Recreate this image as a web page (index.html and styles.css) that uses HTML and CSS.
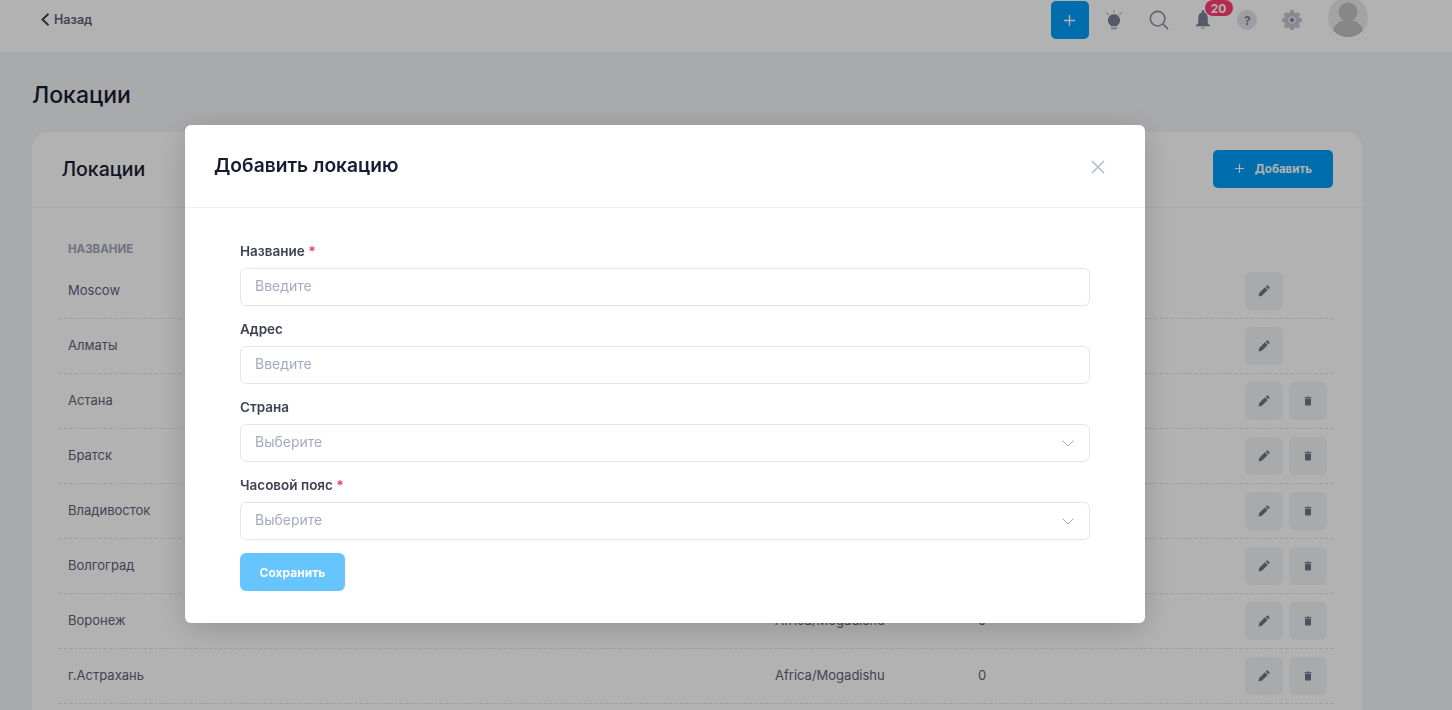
FILE: index.html
```html
<!DOCTYPE html>
<html lang="ru">
<head>
<meta charset="utf-8">
<title>Локации</title>
<link rel="stylesheet" href="styles.css">
</head>
<body>
<svg class="defs" width="0" height="0" aria-hidden="true">
  <symbol id="pen" viewBox="0 0 12 12"><path d="M8.600.7a.9.9 0 0 1 1.300 0l1.400 1.400a.9.9 0 0 1 0 1.300l-.9.9-2.700-2.700zM7 2.300 9.700 5 3.900 10.800.6 11.400l.6-3.300z"/></symbol>
  <symbol id="bin" viewBox="0 0 10 12"><path d="M3.600.4h2.800v1H9.400v1.100H.6V1.400h3zM1.300 3.300h7.400v7a1.300 1.300 0 0 1-1.300 1.300H2.600a1.300 1.300 0 0 1-1.300-1.300z"/></symbol>
</svg>

<div class="page">
  <header class="topbar">
    <a class="back">
      <svg class="back-icon" viewBox="0 0 9 13"><path d="M7.500.8 1.500 6.500l6 5.700"/></svg>
      <span>Назад</span>
    </a>
    <div class="tools">
      <button class="add-square"><svg viewBox="0 0 14 14"><path d="M7 1v12M1 7h12"/></svg></button>
      <span class="tool">
        <svg class="i-bulb" viewBox="0 0 24 26"><path class="rays" d="M12 0v4M2.500 3.500l3.500 3M21.500 3.500l-3.500 3"/><path class="fill" d="M12 5.500a7.200 7.200 0 0 1 4 13.200V20H8v-1.300a7.200 7.200 0 0 1 4-13.200z"/><path class="stem" d="M8.500 21.500h7v2h-7z"/></svg>
      </span>
      <span class="tool">
        <svg class="i-search" viewBox="0 0 22 22"><circle cx="9.500" cy="9.500" r="8"/><path d="m15.500 15.500 5.500 5.500"/></svg>
      </span>
      <span class="tool bell-tool">
        <svg class="i-bell" viewBox="0 0 16 21"><path d="M8 0c.8 0 1.300.6 1.300 1.400v1.200C12 3.300 13 5.500 13 8.500v5.300l2.500 2.500v.7H.5v-.7L3 13.800V8.500c0-3 1-5.200 3.700-5.900V1.400C6.700.6 7.200 0 8 0z"/><path class="soft" d="M5.800 18h4.400a2.200 2.200 0 0 1-4.400 0z"/></svg>
        <span class="badge">20</span>
      </span>
      <span class="tool"><span class="help">?</span></span>
      <span class="tool">
        <svg class="i-gear" viewBox="0 0 20 20"><path d="M8.300 0h3.400l.5 2.500 1.500.7 2.200-1.300 2.300 2.400-1.300 2.100.6 1.600 2.500.5v3.400l-2.500.5-.6 1.600 1.300 2.100-2.300 2.400-2.200-1.300-1.500.7-.5 2.500H8.300l-.5-2.500-1.500-.7-2.200 1.300-2.300-2.400 1.300-2.100-.6-1.600-2.500-.5V8.500l2.500-.5.600-1.600-1.300-2.100 2.300-2.400 2.200 1.300 1.500-.7z"/><circle cx="10" cy="10" r="3.800"/><circle class="hole" cx="10" cy="10" r="2"/></svg>
      </span>
      <span class="avatar">
        <svg viewBox="0 0 40 40"><circle cx="20" cy="15" r="9.500"/><path d="M4 40c0-12 7-17 16-17s16 5 16 17z"/></svg>
      </span>
    </div>
  </header>

  <main class="content">
    <h1 class="page-title">Локации</h1>
    <section class="card">
      <div class="card-head">
        <h2 class="card-title">Локации</h2>
        <button class="add-btn"><svg viewBox="0 0 12 12"><path d="M6 1v10M1 6h10"/></svg><span>Добавить</span></button>
      </div>
      <div class="table">
        <div class="row head"><span>Название</span><span>Часовой пояс</span><span>Сотрудники</span><span></span></div>
        <div class="row"><span>Moscow</span><span>Africa/Mogadishu</span><span>0</span><span class="acts"><a class="act"><svg class="pen"><use href="#pen"/></svg></a></span></div>
        <div class="row"><span>Алматы</span><span>Africa/Mogadishu</span><span>0</span><span class="acts"><a class="act"><svg class="pen"><use href="#pen"/></svg></a></span></div>
        <div class="row"><span>Астана</span><span>Africa/Mogadishu</span><span>0</span><span class="acts"><a class="act"><svg class="pen"><use href="#pen"/></svg></a><a class="act"><svg class="bin"><use href="#bin"/></svg></a></span></div>
        <div class="row"><span>Братск</span><span>Africa/Mogadishu</span><span>0</span><span class="acts"><a class="act"><svg class="pen"><use href="#pen"/></svg></a><a class="act"><svg class="bin"><use href="#bin"/></svg></a></span></div>
        <div class="row"><span>Владивосток</span><span>Africa/Mogadishu</span><span>0</span><span class="acts"><a class="act"><svg class="pen"><use href="#pen"/></svg></a><a class="act"><svg class="bin"><use href="#bin"/></svg></a></span></div>
        <div class="row"><span>Волгоград</span><span>Africa/Mogadishu</span><span>0</span><span class="acts"><a class="act"><svg class="pen"><use href="#pen"/></svg></a><a class="act"><svg class="bin"><use href="#bin"/></svg></a></span></div>
        <div class="row"><span>Воронеж</span><span>Africa/Mogadishu</span><span>0</span><span class="acts"><a class="act"><svg class="pen"><use href="#pen"/></svg></a><a class="act"><svg class="bin"><use href="#bin"/></svg></a></span></div>
        <div class="row"><span>г.Астрахань</span><span>Africa/Mogadishu</span><span>0</span><span class="acts"><a class="act"><svg class="pen"><use href="#pen"/></svg></a><a class="act"><svg class="bin"><use href="#bin"/></svg></a></span></div>
      </div>
    </section>
  </main>
</div>

<div class="overlay">
  <div class="modal">
    <div class="modal-head">
      <h3 class="modal-title">Добавить локацию</h3>
      <svg class="close" viewBox="0 0 14 14"><path d="m1 1 12 12M13 1 1 13"/></svg>
    </div>
    <form class="modal-body">
      <div class="field">
        <label class="label">Название <b>*</b></label>
        <div class="input"><span>Введите</span></div>
      </div>
      <div class="field">
        <label class="label">Адрес</label>
        <div class="input"><span>Введите</span></div>
      </div>
      <div class="field">
        <label class="label">Страна</label>
        <div class="input"><span>Выберите</span><svg class="chev" viewBox="0 0 12 7"><path d="m.7.7 5.300 5.300L11.300.7"/></svg></div>
      </div>
      <div class="field">
        <label class="label">Часовой пояс <b>*</b></label>
        <div class="input"><span>Выберите</span><svg class="chev" viewBox="0 0 12 7"><path d="m.7.7 5.300 5.300L11.300.7"/></svg></div>
      </div>
      <button class="save" type="button">Сохранить</button>
    </form>
  </div>
</div>
</body>
</html>
```

FILE: styles.css
```css
* { box-sizing: border-box; }
html, body { margin: 0; height: 100%; overflow: hidden; }
body {
  font-family: Inter, "Noto Sans", sans-serif;
  background: #f3f4f7;
  color: #3f4254;
}
.defs { position: absolute; }
h1, h2, h3 { margin: 0; }
button { border: 0; font: inherit; padding: 0; }

.topbar {
  height: 52px;
  background: #fff;
  display: flex;
  justify-content: space-between;
  align-items: flex-start;
  padding-right: 84px;
  padding-left: 41px;
}
.back {
  display: flex;
  align-items: center;
  gap: 4px;
  height: 38px;
  font-size: 12.500px;
  font-weight: 600;
  color: #5e6278;
}
.back-icon { width: 9px; height: 13px; fill: none; stroke: #3f4254; stroke-width: 2; }
.tools { display: flex; align-items: center; height: 40px; }
.add-square {
  width: 38px; height: 38px; background: #009ef7; border-radius: 5px;
  display: flex; align-items: center; justify-content: center; margin-right: 3px;
}
.add-square svg { width: 13px; height: 13px; stroke: #fff; stroke-width: 1.500; fill: none; }
.tool { width: 44.500px; height: 40px; display: flex; align-items: center; justify-content: center; position: relative; }
.i-bulb { width: 20px; height: 23px; }
.i-bulb .rays { stroke: #c4c7d2; stroke-width: 1.500; fill: none; }
.i-bulb .fill { fill: #7c8096; }
.i-bulb .stem { fill: #a1a5b7; }
.i-search { width: 20px; height: 20px; margin-left: 2px; fill: none; stroke: #8a8ea2; stroke-width: 1.700; }
.i-bell { width: 16px; height: 20px; fill: #7c8096; }
.i-bell .soft { fill: #c4c7d2; }
.badge {
  position: absolute; left: 24px; top: 0;
  width: 28px; height: 16px; border-radius: 8px;
  background: #ff3d71; color: #fff; font-size: 12px; font-weight: 700;
  display: flex; align-items: center; justify-content: center;
}
.help {
  width: 20px; height: 20px; border-radius: 50%;
  background: #e3e3e9; color: #7c8096; font-size: 12px; font-weight: 700;
  display: flex; align-items: center; justify-content: center;
}
.i-gear { width: 20px; height: 20px; fill: #c4c6d0; }
.i-gear circle { fill: #e4e6ef; }
.i-gear .hole { fill: #7c8096; }
.avatar {
  width: 40px; height: 40px; border-radius: 50%;
  background: #eaeaea; overflow: hidden; margin-left: 14px; margin-top: -6px;
}
.avatar svg { display: block; fill: #c2c2c2; }

.content { padding: 0 90px 0 32px; }
.page-title {
  font-size: 23px; font-weight: 500; color: #181c32; line-height: 28px;
  padding-top: 29px; margin-bottom: 23px;
}
.card { background: #fff; border-radius: 16px 16px 0 0; }
.card-head {
  height: 76px; display: flex; align-items: center; justify-content: space-between;
  padding: 0 29px 2px 29.500px; border-bottom: 1px solid #eff2f5;
}
.card-title { font-size: 19.500px; font-weight: 500; color: #181c32; }
.add-btn {
  width: 120px; height: 38px; border-radius: 5px; background: #009ef7; color: #fff;
  font-size: 11.500px; font-weight: 700; display: flex; align-items: center; justify-content: center; gap: 10px;
}
.add-btn svg { width: 11px; height: 11px; stroke: #fff; stroke-width: 1.300; fill: none; }

.table { padding: 34px 29px 30px 27px; }
.row {
  display: grid; grid-template-columns: 707px 203px 267px 97px;
  height: 55px; align-items: center;
  border-bottom: 1px dashed #dfe1e8;
  font-size: 13px; color: #5e6278;
}
.row > span { padding: 0 0 2px 9px; }
.row > .acts { padding: 0 0 0 8.500px; }
.row.head {
  height: 22px; border: 0; align-items: start;
  font-size: 11.500px; font-weight: 700; color: #a1a5b7; text-transform: uppercase;
}
.acts { display: flex; gap: 6px; }
.act {
  width: 38px; height: 38px; border-radius: 6px; background: #f3f4f7;
  display: flex; align-items: center; justify-content: center;
}
.pen { width: 12px; height: 12px; fill: #6f7389; }
.bin { width: 8px; height: 10px; fill: #6f7389; }

.overlay {
  position: fixed; inset: 0; background: rgba(0, 0, 0, .3);
  display: flex; justify-content: center; padding: 125px 122px 0 0;
}
.modal {
  width: 960px; height: 498px; background: #fff; border-radius: 6px;
  box-shadow: 0 6px 30px rgba(0, 0, 0, .18);
}
.modal-head {
  height: 83px; display: flex; align-items: center; justify-content: space-between;
  padding: 0 40px 2px 29px; border-bottom: 1px solid #eff2f5;
}
.modal-title { font-size: 19.200px; font-weight: 600; color: #181c32; }
.close { width: 14px; height: 14px; stroke: #b5b8c8; stroke-width: 1.500; fill: none; margin-top: 4px; }
.modal-body { padding: 34px 55px 0; }
.field { margin-bottom: 14px; }
.label {
  display: block; font-size: 13.500px; font-weight: 600; color: #3f4254; line-height: 18px; margin-bottom: 8px;
}
.label b { color: #f1416c; font-weight: 700; }
.input {
  height: 38px; border: 1px solid #e4e6ef; border-radius: 6px; background: #fff;
  display: flex; align-items: center; justify-content: space-between;
  padding: 0 15px 0 14px; font-size: 14px; color: #a5aac4;
}
.input span { padding-bottom: 3px; }
.chev { width: 12px; height: 7px; fill: none; stroke: #a1a5b7; stroke-width: 1; }
.save {
  display: block; width: 105px; height: 38px; border-radius: 6px; background: #67c5fd; color: #fff;
  font-size: 12px; font-weight: 700; margin-top: -1px;
}
```
